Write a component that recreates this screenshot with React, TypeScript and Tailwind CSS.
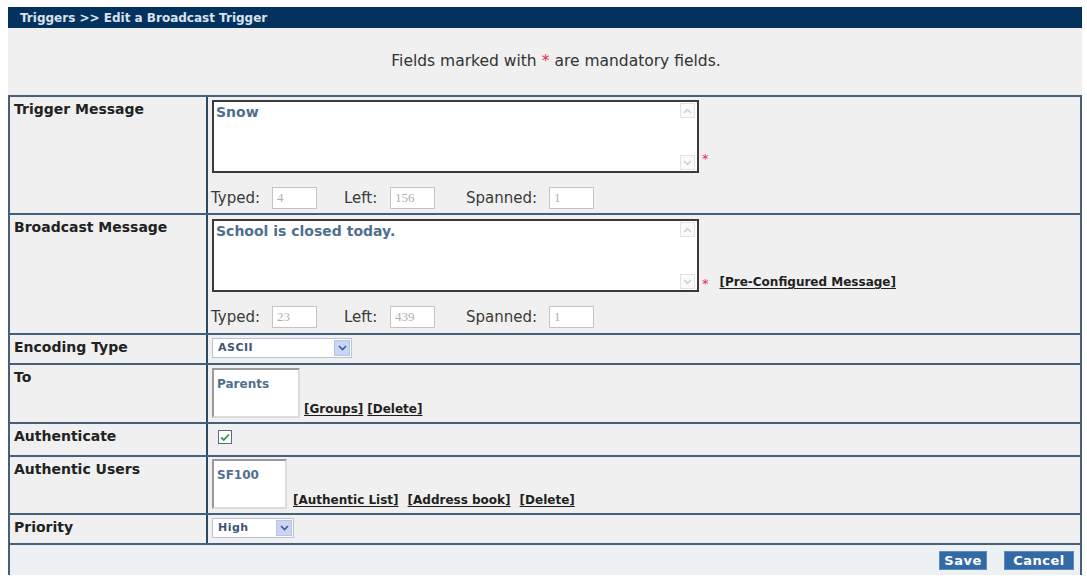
import React from 'react';

const font = "font-['DejaVu_Sans',Verdana,sans-serif]";

// faux scroll arrow box used inside the textareas
function ScrollArrow({ up }: { up?: boolean }) {
  return (
    <div className="w-[15px] h-[15px] border border-[#e2e2e2] bg-[#fafafa] flex items-center justify-center">
      <svg width="9" height="6" viewBox="0 0 9 6" fill="none">
        <path d={up ? 'M1 5 L4.5 1.5 L8 5' : 'M1 1 L4.5 4.5 L8 1'} stroke="#c8c8c8" strokeWidth="1.2" />
      </svg>
    </div>
  );
}

function MessageBox({ text }: { text: string }) {
  return (
    <div className="w-[487px] h-[73px] border-2 border-[#3a3a3a] bg-white flex">
      <div className="flex-1 px-[2px] pt-[1px] text-[14px] font-bold text-[#4f6f8f] leading-[19px]">{text}</div>
      <div className="w-[17px] flex flex-col justify-between py-[1px] pr-[1px]">
        <ScrollArrow up />
        <ScrollArrow />
      </div>
    </div>
  );
}

function Counter({ label, value, labelWidth }: { label: string; value: string; labelWidth: string }) {
  return (
    <div className="flex items-center">
      <span className={`${labelWidth} text-[15px] text-[#3a3a3a]`}>{label}</span>
      <div className="w-[45px] h-[22px] border border-[#c4c4c4] bg-white pl-[4px] flex items-center font-['Liberation_Serif',serif] text-[13px] text-[#b0b0b0]">
        {value}
      </div>
    </div>
  );
}

function Counters({ typed, left }: { typed: string; left: string }) {
  return (
    <div className="flex items-center h-[22px] -ml-[1px]">
      <Counter label="Typed:" value={typed} labelWidth="w-[61px]" />
      <div className="w-[27px]" />
      <Counter label="Left:" value={left} labelWidth="w-[46px]" />
      <div className="w-[31px]" />
      <Counter label="Spanned:" value="1" labelWidth="w-[83px]" />
    </div>
  );
}

function Star() {
  return <span className="text-[#e0304a] text-[13px] leading-none ml-[3px]">*</span>;
}

function LinkText({ children }: { children: React.ReactNode }) {
  return <span className="block text-[12px] leading-[15px] font-bold text-[#1f1f1f] underline underline-offset-2">{children}</span>;
}

function SelectBox({ width, value }: { width: string; value: string }) {
  return (
    <div className={`${width} h-[20px] border border-[#b7c3d6] bg-white flex items-center justify-between pl-[5px] pr-[1px]`}>
      <span className="text-[11px] font-bold text-[#3d5573] tracking-[0.5px]">{value}</span>
      <div className="w-[16px] h-[16px] bg-[#c9d5f1] border border-[#b4c3e6] flex items-center justify-center">
        <svg width="9" height="6" viewBox="0 0 9 6" fill="none">
          <path d="M1 1 L4.5 4.5 L8 1" stroke="#3b5a99" strokeWidth="1.6" />
        </svg>
      </div>
    </div>
  );
}

function ListBox({ width, value }: { width: string; value: string }) {
  return (
    <div className={`${width} h-[50px] border-2 border-t-[#9a9a9a] border-l-[#9a9a9a] border-r-[#dcdcdc] border-b-[#dcdcdc] bg-white px-[3px] pt-[1px]`}>
      <span className="text-[12px] font-bold text-[#4f6f8f]">{value}</span>
    </div>
  );
}

function Row({ label, height, children }: { label: string; height: string; children: React.ReactNode }) {
  return (
    <div className={`flex ${height} border-b-2 border-[#44607a]`}>
      <div className="w-[198px] border-r-2 border-[#2e4a63] pl-[4px] pt-[2px] text-[14px] font-bold text-[#222]">{label}</div>
      <div className="flex-1 pl-[4px]">{children}</div>
    </div>
  );
}

export default function App() {
  return (
    <div className={`w-[1087px] h-[576px] bg-white pt-[7px] pl-[8px] overflow-hidden ${font}`}>
      <div className="w-[1074px]">
        {/* title bar */}
        <div className="h-[21px] bg-[#04325f] pl-[12px] flex items-center text-[12px] font-bold text-[#d9e2ec]">
          Triggers &gt;&gt; Edit a Broadcast Trigger
        </div>

        <div className="h-[67px] bg-[#f0f0f0] flex items-center justify-center text-[15.5px] text-[#333] pl-[22px]">
          Fields marked with <span className="text-[#e0304a] mx-[5px]">*</span> are mandatory fields.
        </div>

        {/* form table */}
        <div className="border-2 border-[#44607a] bg-[#f0f0f0] h-[480px]">
          <Row label="Trigger Message" height="h-[118px]">
            <div className="pt-[3px] flex flex-col">
              <div className="flex items-end">
                <MessageBox text="Snow" />
                <div className="mb-[3px]"><Star /></div>
              </div>
              <div className="mt-[14px]">
                <Counters typed="4" left="156" />
              </div>
            </div>
          </Row>

          <Row label="Broadcast Message" height="h-[120px]">
            <div className="pt-[4px] flex flex-col">
              <div className="flex items-end">
                <MessageBox text="School is closed today." />
                <div className="mb-[2px] flex items-end">
                  <Star />
                  <span className="ml-[11px]"><LinkText>[Pre-Configured Message]</LinkText></span>
                </div>
              </div>
              <div className="mt-[14px]">
                <Counters typed="23" left="439" />
              </div>
            </div>
          </Row>

          <Row label="Encoding Type" height="h-[30px]">
            <div className="pt-[3px]">
              <SelectBox width="w-[140px]" value="ASCII" />
            </div>
          </Row>

          <Row label="To" height="h-[59px]">
            <div className="pt-[3px] flex items-end gap-[4px]">
              <ListBox width="w-[88px]" value="Parents" />
              <div className="flex gap-[4px] mb-[1px]">
                <LinkText>[Groups]</LinkText>
                <LinkText>[Delete]</LinkText>
              </div>
            </div>
          </Row>

          <Row label="Authenticate" height="h-[33px]">
            <div className="pt-[6px] pl-[6px]">
              <div className="w-[14px] h-[14px] border border-[#5d6c7a] bg-white flex items-center justify-center">
                <svg width="10" height="9" viewBox="0 0 10 9" fill="none">
                  <path d="M1.2 4.5 L3.8 7 L8.8 1.5" stroke="#2f9a3a" strokeWidth="1.8" />
                </svg>
              </div>
            </div>
          </Row>

          <Row label="Authentic Users" height="h-[58px]">
            <div className="pt-[2px] flex items-end">
              <ListBox width="w-[75px]" value="SF100" />
              <div className="flex items-end mb-[1px] ml-[6px] gap-[9px]">
                <LinkText>[Authentic List]</LinkText>
                <LinkText>[Address book]</LinkText>
                <LinkText>[Delete]</LinkText>
              </div>
            </div>
          </Row>

          <Row label="Priority" height="h-[30px]">
            <div className="pt-[3px]">
              <SelectBox width="w-[82px]" value="High" />
            </div>
          </Row>

          {/* actions */}
          <div className="h-[30px] bg-[#eef1f3] flex items-center justify-end pr-[6px] gap-[17px]">
            <button className="w-[48px] h-[19px] bg-[#336aa5] border border-[#5d8bbd] text-white text-[13px] font-bold tracking-[0.5px] leading-none">
              Save
            </button>
            <button className="w-[70px] h-[19px] bg-[#336aa5] border border-[#5d8bbd] text-white text-[13px] font-bold tracking-[0.5px] leading-none">
              Cancel
            </button>
          </div>
        </div>
      </div>
    </div>
  );
}
